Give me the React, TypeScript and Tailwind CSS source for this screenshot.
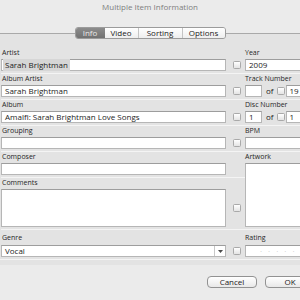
import React from "react";

const line = "shadow-[inset_0_2px_0_#e3e3e3,inset_0_3px_0_#f4f4f4]";

function Label({ children, first, className = "" }: { children?: React.ReactNode; first?: boolean; className?: string }) {
  return (
    <div className={`flex items-center text-[7px] leading-none text-[#262626] ${first ? "" : line} ${className}`}>
      {children}
    </div>
  );
}

function Field({ children, className = "" }: { children?: React.ReactNode; className?: string }) {
  return (
    <div className={`h-full bg-white border border-[#b6b6b6] border-t-[#9d9d9d] flex items-center text-[8px] leading-none text-[#1c1c1c] ${className}`}>
      {children}
    </div>
  );
}

function Check() {
  return <div className="w-[8px] h-[8px] shrink-0 rounded-[1.5px] border border-[#a9a9a9] bg-gradient-to-b from-white to-[#e4e4e4]" />;
}

function CheckCell({ show = true }: { show?: boolean }) {
  return <div className="flex items-center pl-[7px]">{show && <Check />}</div>;
}

export default function App() {
  return (
    <div className="w-[300px] h-[300px] overflow-hidden bg-[#ebebeb] font-['Open_Sans',sans-serif]">
      <div className="h-[33px]">
        <div className="h-[13px] flex items-center justify-center text-[8px] leading-none text-[#7e7e7e]">
          Multiple Item Information
        </div>
      </div>
      <div className="w-[360px] border-t border-[#a9a9a9] bg-[#e3e3e3]">
        <div className="-mt-[7px] w-[300px] flex justify-center">
          <div className="flex h-[12px] rounded-[3px] border border-[#9b9b9b] overflow-hidden text-[8px] leading-none text-[#1a1a1a]">
            <div className="w-[29px] flex items-center justify-center bg-gradient-to-b from-[#8c8c8c] to-[#727272] text-[#e9e9e9]">Info</div>
            <div className="w-[34px] flex items-center justify-center bg-gradient-to-b from-white to-[#eeeeee] border-r border-[#c4c4c4]">Video</div>
            <div className="w-[44px] flex items-center justify-center bg-gradient-to-b from-white to-[#eeeeee] border-r border-[#c4c4c4]">Sorting</div>
            <div className="w-[42px] flex items-center justify-center bg-gradient-to-b from-white to-[#eeeeee]">Options</div>
          </div>
        </div>

        <div className="mt-[6px] pl-[1px] grid grid-cols-[225px_19px_95px] grid-rows-[14px_12px_14px_12px_14px_12px_14px_12px_14px_12px_14px_38px_18px_12px]">
          {/* Artist */}
          <Label first className="pl-[1px]">Artist</Label>
          <Label first />
          <Label first>Year</Label>
          <Field>
            <span className="ml-[1px] bg-[#d6d6d6] px-[2px] py-[2px]">Sarah Brightman</span>
          </Field>
          <CheckCell />
          <Field className="pl-[3px]">2009</Field>

          {/* Album Artist */}
          <Label className="pl-[1px]">Album Artist</Label>
          <Label />
          <Label>Track Number</Label>
          <Field className="pl-[3px]">Sarah Brightman</Field>
          <CheckCell />
          <div className="flex items-center h-full">
            <Field className="w-[17px] shrink-0" />
            <span className="ml-[4px] text-[8px] leading-none text-[#1c1c1c]">of</span>
            <div className="ml-[3px]"><Check /></div>
            <Field className="ml-[1px] w-[40px] pl-[3px]">19</Field>
          </div>

          {/* Album */}
          <Label className="pl-[1px]">Album</Label>
          <Label />
          <Label>Disc Number</Label>
          <Field className="pl-[3px]">Amalfi: Sarah Brightman Love Songs</Field>
          <CheckCell />
          <div className="flex items-center h-full">
            <Field className="w-[17px] shrink-0 pl-[3px]">1</Field>
            <span className="ml-[4px] text-[8px] leading-none text-[#1c1c1c]">of</span>
            <div className="ml-[3px]"><Check /></div>
            <Field className="ml-[1px] w-[40px] pl-[3px]">1</Field>
          </div>

          {/* Grouping */}
          <Label className="pl-[1px]">Grouping</Label>
          <Label />
          <Label>BPM</Label>
          <Field />
          <CheckCell />
          <Field />

          {/* Composer */}
          <Label className="pl-[1px]">Composer</Label>
          <Label />
          <Label>Artwork</Label>
          <Field />
          <CheckCell show={false} />
          <div className="row-span-3 bg-white border border-[#b6b6b6] border-t-[#9d9d9d]" />

          {/* Comments */}
          <Label className="pl-[1px]">Comments</Label>
          <Label />
          <Field />
          <div className="flex items-center pl-[7px]"><Check /></div>

          {/* Genre */}
          <Label className="pl-[1px] pt-[2px]">Genre</Label>
          <Label />
          <Label className="pt-[2px]">Rating</Label>
          <Field className="pl-[3px] justify-between">
            <span>Vocal</span>
            <div className="h-full w-[11px] border-l border-[#c8c8c8] flex items-center justify-center">
              <svg width="5" height="3" viewBox="0 0 5 3"><path d="M0 0h5L2.5 3z" fill="#4a4a4a" /></svg>
            </div>
          </Field>
          <CheckCell />
          <Field className="w-[70px] pl-[14px] gap-[6px] text-[#c9c9c9]">
            <span>·</span><span>·</span><span>·</span><span>·</span><span>·</span>
          </Field>
        </div>
        <div className={`h-[8px] ${line}`} />
      </div>

      <div className="mt-[11px] pl-[207px] flex gap-[8px]">
        <div className="w-[50px] h-[12px] shrink-0 rounded-[4px] border border-[#929292] bg-gradient-to-b from-white to-[#e8e8e8] flex items-center justify-center text-[8px] leading-none text-[#1a1a1a]">Cancel</div>
        <div className="w-[50px] h-[12px] shrink-0 rounded-[4px] border border-[#929292] bg-gradient-to-b from-white to-[#e8e8e8] flex items-center justify-center text-[8px] leading-none text-[#1a1a1a]">OK</div>
      </div>
    </div>
  );
}
